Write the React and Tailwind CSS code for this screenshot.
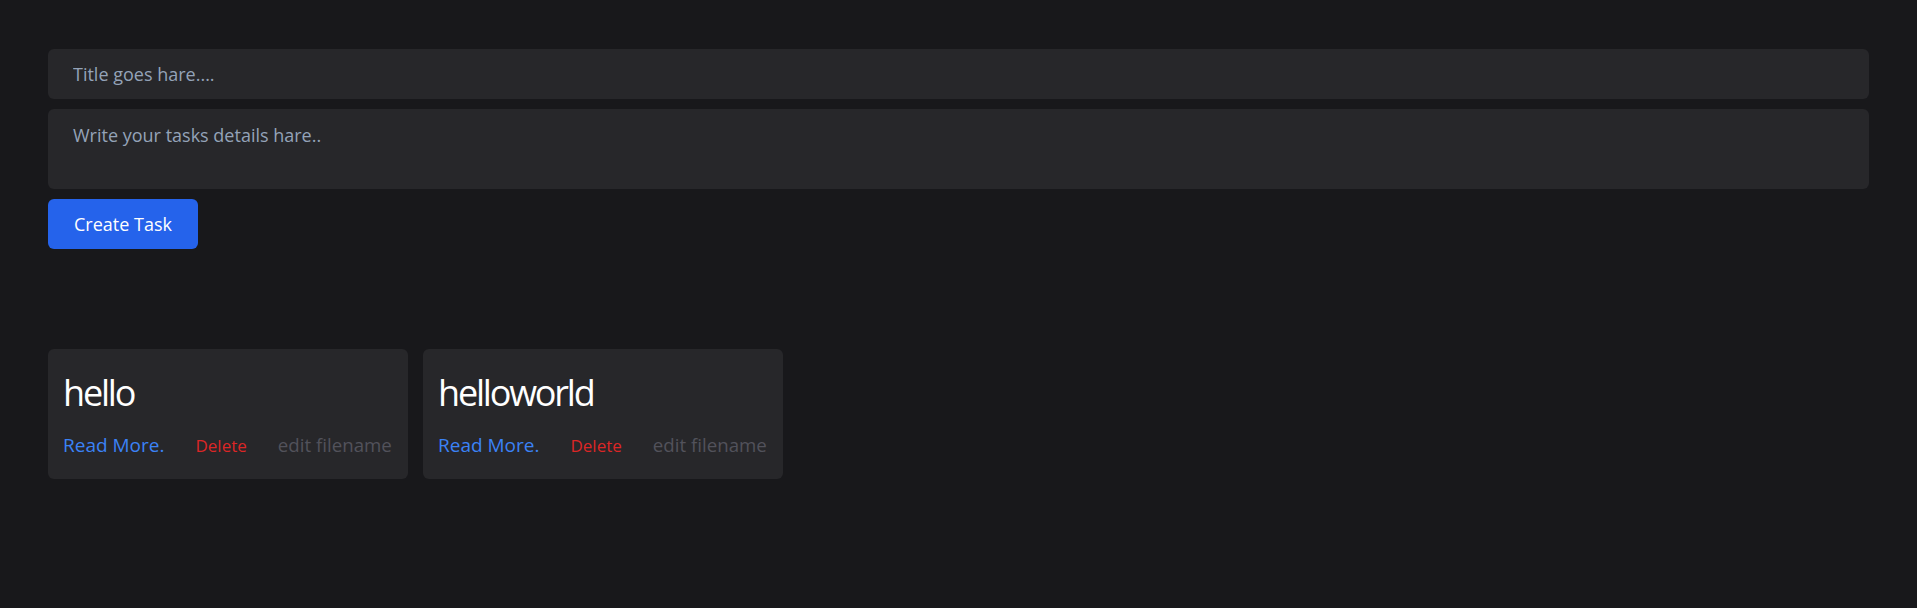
import { useState } from 'react'

const initialTasks = [
  { id: 1, title: 'hello' },
  { id: 2, title: 'helloworld' },
]

export default function App() {
  const [title, setTitle] = useState('')
  const [details, setDetails] = useState('')
  const [tasks, setTasks] = useState(initialTasks)

  function handleCreate(e) {
    e.preventDefault()
    if (!title) return
    setTasks([...tasks, { id: Date.now(), title }])
    setTitle('')
    setDetails('')
  }

  return (
    <div className="min-h-[608px] bg-[#18181b] px-12 pt-[49px] pb-12 font-['Open_Sans',sans-serif]">
      {/* New task form */}
      <form onSubmit={handleCreate} className="flex flex-col gap-[10px]">
        <input
          type="text"
          value={title}
          onChange={(e) => setTitle(e.target.value)}
          placeholder="Title goes hare...."
          className="w-full h-[50px] px-[25px] py-[11px] rounded-md bg-[#27272a] text-lg leading-7 text-white placeholder:text-[#94a3b8] outline-none border-0"
        />
        <textarea
          value={details}
          onChange={(e) => setDetails(e.target.value)}
          placeholder="Write your tasks details hare.."
          className="w-full h-[80px] px-[25px] pt-3 rounded-md bg-[#27272a] text-lg leading-7 text-white placeholder:text-[#94a3b8] outline-none border-0 resize-none"
        />
        <div>
          <button
            type="submit"
            className="w-[150px] h-[50px] rounded-md bg-[#2563eb] text-lg leading-7 text-white cursor-pointer border-0"
          >
            Create Task
          </button>
        </div>
      </form>

      {/* Task cards */}
      <div className="flex flex-wrap gap-[15px] mt-[100px]">
        {tasks.map((t) => (
          <div key={t.id} className="w-[360px] h-[130px] rounded-md bg-[#27272a] px-[15px] pt-[24px] overflow-hidden">
            <h2 className="text-4xl leading-10 tracking-[-2.2px] text-white font-normal">{t.title}</h2>
            <div className="flex items-baseline whitespace-nowrap mt-[18px]">
              <a href="#" className="shrink-0 text-[19px] leading-7 text-[#3b82f6] no-underline">Read More.</a>
              <button className="shrink-0 ml-[31px] text-[17px] leading-7 text-[#dc2626] bg-transparent border-0 p-0 cursor-pointer">Delete</button>
              <button className="shrink-0 ml-[31px] text-[18.7px] leading-7 text-[#52525b] bg-transparent border-0 p-0 cursor-pointer">edit filename</button>
            </div>
          </div>
        ))}
      </div>
    </div>
  )
}
